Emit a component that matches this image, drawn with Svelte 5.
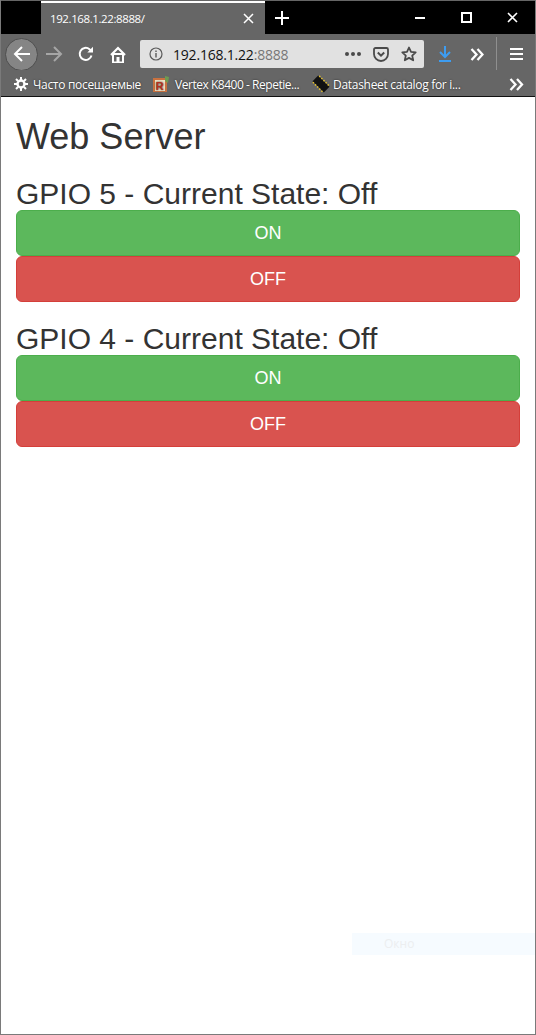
<script>
  const gpios = [5, 4];
</script>

<div class="window">
  <div class="titlebar">
    <div class="tab">
      <span class="tab-title">192.168.1.22:8888/</span>
      <svg class="tab-close" width="11" height="11" viewBox="0 0 11 11"><path d="M1 1l9 9M10 1l-9 9" stroke="#fff" stroke-width="1.5"/></svg>
    </div>
    <svg class="newtab" width="14" height="14" viewBox="0 0 14 14"><path d="M7 0v14M0 7h14" stroke="#fff" stroke-width="2"/></svg>
    <div class="winbtns">
      <svg width="11" height="11" viewBox="0 0 11 11"><path d="M0 6h10" stroke="#fff" stroke-width="2"/></svg>
      <svg width="11" height="11" viewBox="0 0 11 11"><rect x="1" y="1" width="9" height="9" fill="none" stroke="#fff" stroke-width="2"/></svg>
      <svg width="11" height="11" viewBox="0 0 11 11"><path d="M1 1l9 9M10 1l-9 9" stroke="#fff" stroke-width="1.6"/></svg>
    </div>
  </div>

  <div class="toolbar">
    <div class="back">
      <svg width="18" height="18" viewBox="0 0 18 18"><path d="M9 2L2 9l7 7M2 9h15" fill="none" stroke="#fff" stroke-width="2"/></svg>
    </div>
    <svg class="ico fwd" width="18" height="18" viewBox="0 0 18 18"><path d="M9 2l7 7-7 7M16 9H1" fill="none" stroke="#a6a6a6" stroke-width="2"/></svg>
    <svg class="ico reload" width="16" height="16" viewBox="0 0 16 16"><path d="M13.5 9.5A6 6 0 1 1 11.5 3.2L14 5" fill="none" stroke="#fff" stroke-width="2"/><path d="M15 0.8V6.500H9.300z" fill="#fff"/></svg>
    <svg class="ico home" width="16" height="17" viewBox="0 0 16 17"><path d="M1 9l7-7 7 7" fill="none" stroke="#fff" stroke-width="2.200"/><path d="M3 8h10v8.500H3z" fill="none" stroke="#fff" stroke-width="2"/><path d="M6.500 11h3v5.500h-3z" fill="#fff"/></svg>
    <div class="urlbar">
      <svg class="info" width="14" height="14" viewBox="0 0 14 14"><circle cx="7" cy="7" r="6" fill="none" stroke="#5a5a5a" stroke-width="1.2"/><path d="M7 6v4.500M7 3.500v1.400" stroke="#5a5a5a" stroke-width="1.400"/></svg>
      <span class="url">192.168.1.22<span class="port">:8888</span></span>
      <span class="dots"><i></i><i></i><i></i></span>
      <svg class="pocket" width="16" height="15" viewBox="0 0 16 15"><path d="M1 2.500A1.500 1.500 0 0 1 2.500 1h11A1.500 1.500 0 0 1 15 2.500V7A7 7 0 0 1 1 7z" fill="none" stroke="#4a4a4a" stroke-width="1.800"/><path d="M4.800 5.500L8 8.700l3.200-3.200" fill="none" stroke="#4a4a4a" stroke-width="2"/></svg>
      <svg class="star" width="16" height="16" viewBox="0 0 16 16"><path d="M8 1.500l2 4.400 4.700.5-3.500 3.200 1 4.700L8 11.900l-4.200 2.400 1-4.700L1.300 6.400 6 5.900z" fill="none" stroke="#4a4a4a" stroke-width="1.800" stroke-linejoin="round"/></svg>
    </div>
    <svg class="ico dl" width="14" height="16" viewBox="0 0 14 16"><path d="M7 0v11M2 6L7 11l5-5M1 15h12" fill="none" stroke="#3d9cf0" stroke-width="2"/></svg>
    <svg class="ico more" width="14" height="13" viewBox="0 0 14 13"><path d="M1.500 1l5 5.500-5 5.500M7.500 1l5 5.500-5 5.500" fill="none" stroke="#fff" stroke-width="2.300"/></svg>
    <span class="sep"></span>
    <svg class="ico menu" width="13" height="12" viewBox="0 0 13 12"><path d="M0 1h13M0 6h13M0 11h13" stroke="#fff" stroke-width="2"/></svg>
  </div>

  <div class="bookmarks">
    <span class="bm first">
      <svg width="14" height="14" viewBox="0 0 14 14"><circle cx="7" cy="7" r="3.500" fill="none" stroke="#fff" stroke-width="2.400"/><path d="M7 0v3M7 11v3M0 7h3M11 7h3M2 2l2 2M10 10l2 2M12 2l-2 2M4 10l-2 2" stroke="#fff" stroke-width="2"/></svg>
      Часто посещаемые
    </span>
    <span class="bm vertex">
      <svg width="16" height="16" viewBox="0 0 16 16"><rect x="0" y="2" width="14" height="14" fill="#c9713f"/><rect x="2" y="4" width="10" height="11" fill="#f1e2c4"/><path d="M12 0l4 1-1 6-3-2z" fill="#6d9a52"/><text x="2.800" y="13.800" class="r">R</text></svg>
      Vertex K8400 - Repetie...
    </span>
    <span class="bm data">
      <svg width="18" height="18" viewBox="0 0 18 18"><g transform="rotate(45 9 9)"><rect x="1" y="5" width="16" height="8" fill="#111"/><path d="M2 4.500h14M2 13.500h14" stroke="#e6c02a" stroke-width="1.500" stroke-dasharray="1.500 1.500"/></g></svg>
      Datasheet catalog for i...
    </span>
    <svg class="bm-more" width="15" height="13" viewBox="0 0 15 13"><path d="M1.500 1l5 5.500-5 5.500M8 1l5 5.500-5 5.500" fill="none" stroke="#fff" stroke-width="2.300"/></svg>
  </div>

  <main>
    <h1>Web Server</h1>
    {#each gpios as gpio}
      <section>
        <h3>GPIO {gpio} - Current State: Off</h3>
        <button class="btn on">ON</button>
        <button class="btn off">OFF</button>
      </section>
    {/each}
    <div class="watermark"><span>Окно</span></div>
  </main>
</div>

<style>
  :global(body) {
    margin: 0;
    background: #fff;
  }
  .window {
    box-sizing: border-box;
    width: 536px;
    height: 1035px;
    border: 1px solid #7a7a7a;
    border-top: 0;
    display: flex;
    flex-direction: column;
    font-family: "Liberation Sans", Arial, sans-serif;
    overflow: hidden;
  }
  .titlebar {
    height: 34px;
    flex: none;
    background: #000;
    display: flex;
    align-items: center;
    padding-left: 40px;
    border-top: 1px solid #666;
    box-sizing: border-box;
  }
  .tab {
    width: 224px;
    height: 33px;
    box-sizing: border-box;
    background: #666;
    border-top: 2px solid #fff;
    display: flex;
    align-items: center;
    justify-content: space-between;
    padding: 0 11px 0 9px;
    color: #fff;
    font-size: 11.5px;
    font-family: "Open Sans", sans-serif;
    letter-spacing: -0.4px;
  }
  .newtab {
    margin-left: 10px;
  }
  .winbtns {
    margin-left: auto;
    display: flex;
    gap: 35px;
    padding-right: 17px;
    align-items: center;
  }
  .toolbar {
    height: 36px;
    flex: none;
    background: #666;
    display: flex;
    align-items: center;
    box-sizing: border-box;
    padding-top: 4px;
  }
  .back {
    width: 33px;
    height: 33px;
    flex: none;
    margin-left: 4px;
    box-sizing: border-box;
    border-radius: 50%;
    background: #858585;
    border: 1px solid #4e4e4e;
    display: flex;
    align-items: center;
    justify-content: center;
  }
  .fwd {
    margin-left: 7px;
  }
  .reload {
    margin-left: 15px;
  }
  .home {
    margin-left: 16px;
  }
  .urlbar {
    width: 284px;
    height: 28px;
    margin-left: 14px;
    box-sizing: border-box;
    background: #e1e1e1;
    border-radius: 2px;
    display: flex;
    align-items: center;
    padding: 0 7px 0 9px;
  }
  .url {
    margin-left: 10px;
    font-family: "Open Sans", sans-serif;
    font-size: 14px;
    color: #111;
    letter-spacing: -0.2px;
  }
  .port {
    color: #777;
  }
  .dots {
    margin-left: auto;
    display: flex;
    gap: 2px;
  }
  .dots i {
    width: 4px;
    height: 4px;
    border-radius: 50%;
    background: #4a4a4a;
  }
  .pocket {
    margin-left: 12px;
  }
  .star {
    margin-left: 12px;
  }
  .dl {
    margin-left: 14px;
  }
  .more {
    margin-left: 18px;
  }
  .sep {
    width: 1px;
    height: 34px;
    flex: none;
    background: #8f8f8f;
    margin-left: 12px;
  }
  .menu {
    margin-left: 13px;
  }
  .bookmarks {
    height: 24px;
    padding-top: 2px;
    flex: none;
    background: #666;
    border-bottom: 1px solid #111;
    display: flex;
    align-items: center;
    padding-left: 13px;
    color: #fff;
    font-family: "Open Sans", sans-serif;
    font-size: 12px;
    letter-spacing: -0.3px;
  }
  .bm {
    display: flex;
    align-items: center;
    gap: 5px;
    white-space: nowrap;
    text-shadow: 0 0 2px #222;
  }
  .vertex {
    margin-left: 12px;
    gap: 6px;
    letter-spacing: -0.47px;
  }
  .data {
    margin-left: 13px;
    gap: 3px;
  }
  .bm-more {
    margin-left: auto;
    margin-right: 11px;
  }
  .r {
    font: bold 11px "Liberation Sans", sans-serif;
    fill: #b5301e;
  }
  main {
    flex: 1;
    padding: 0 15px;
    color: #333;
    position: relative;
    background: #fff;
  }
  h1 {
    font-size: 36px;
    font-weight: 400;
    line-height: 40px;
    margin: 20px 0 10px;
  }
  h3 {
    font-size: 30px;
    font-weight: 400;
    line-height: 33px;
    margin: 0;
  }
  section {
    margin-top: 20px;
  }
  .btn {
    display: block;
    width: 100%;
    height: 46px;
    box-sizing: border-box;
    border: 1px solid;
    border-radius: 6px;
    color: #fff;
    font: 18px "Liberation Sans", Arial, sans-serif;
    padding: 0;
  }
  .on {
    background: #5cb85c;
    border-color: #4cae4c;
  }
  .off {
    background: #d9534f;
    border-color: #d43f3a;
  }
  .watermark {
    position: absolute;
    left: 351px;
    right: 0;
    top: 836px;
    height: 22px;
    background: #f6fbff;
    color: #eceef0;
    font-size: 12px;
    line-height: 22px;
    font-family: "Open Sans", sans-serif;
  }
  .watermark span {
    margin-left: 32px;
  }
</style>
